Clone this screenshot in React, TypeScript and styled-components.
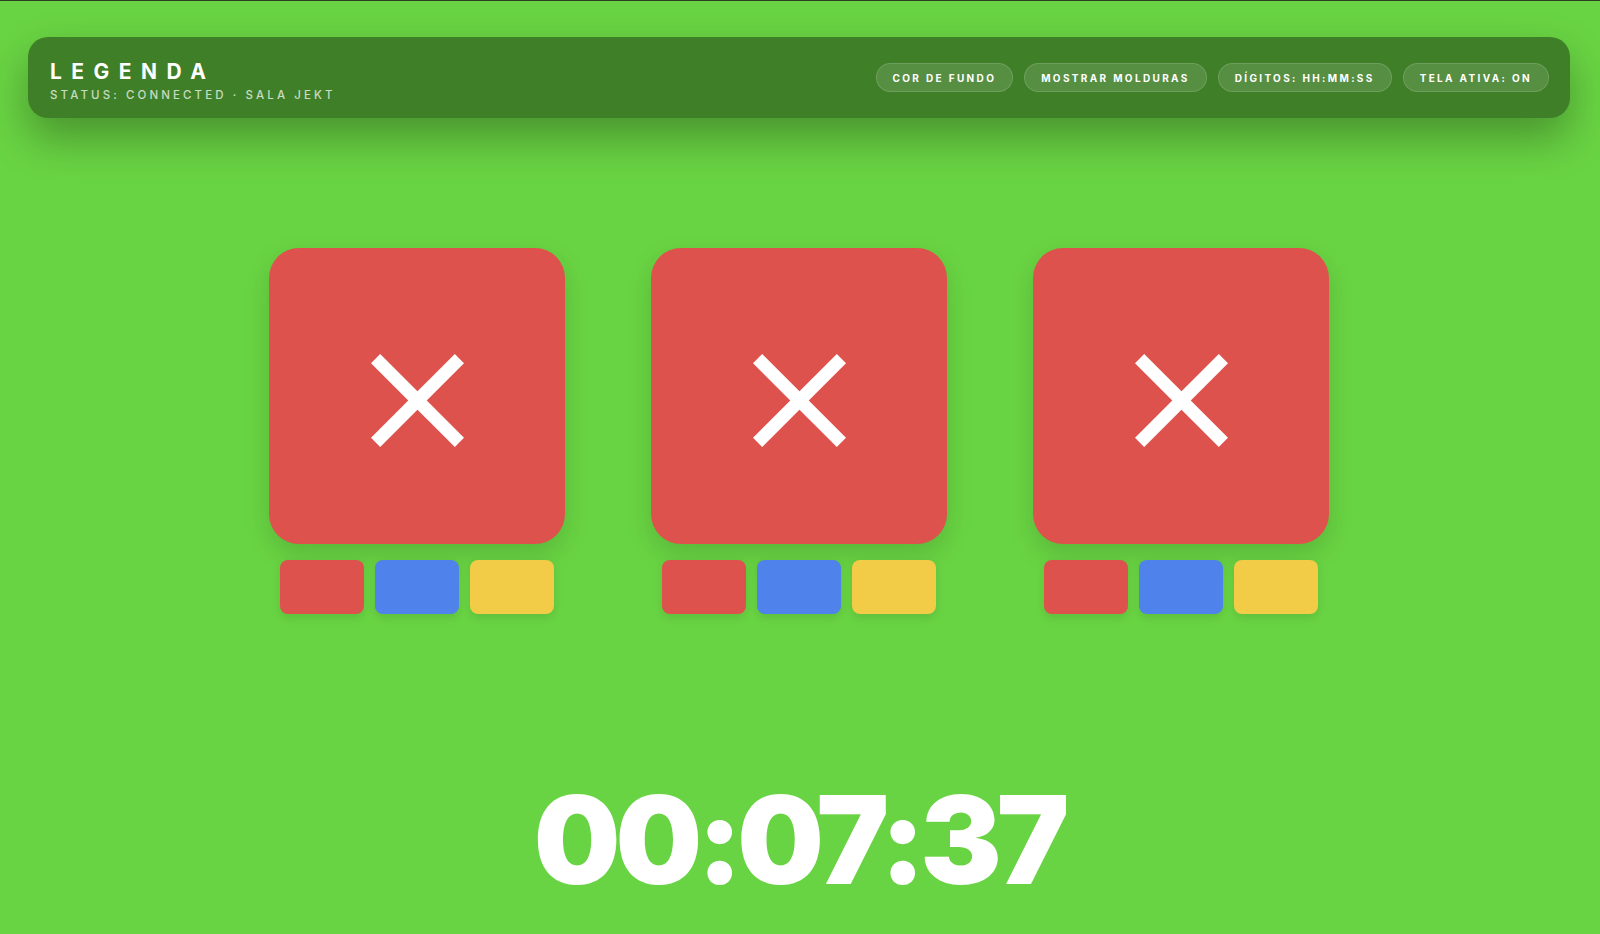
import styled, { createGlobalStyle } from "styled-components";

const GlobalStyle = createGlobalStyle`
  html, body {
    margin: 0;
    padding: 0;
    background: #69d443;
    font-family: Inter, "Liberation Sans", sans-serif;
    color: #ffffff;
  }
  * {
    box-sizing: border-box;
  }
`;

const Page = styled.div`
  min-height: 100vh;
  display: flex;
  flex-direction: column;
  padding: 36px 30px 0 28px;
  border-top: 1px solid #2c3f25;
`;

const Header = styled.header`
  height: 81px;
  display: flex;
  align-items: center;
  justify-content: space-between;
  padding: 0 21px 0 22px;
  border-radius: 20px;
  background: rgba(0, 0, 0, 0.4);
  box-shadow: 0 20px 44px rgba(0, 0, 0, 0.3);
`;

const Brand = styled.div`
  display: flex;
  flex-direction: column;
  gap: 8px;
  padding-top: 8px;
`;

const Title = styled.h1`
  margin: 0;
  font-size: 21px;
  font-weight: 700;
  line-height: 1;
  letter-spacing: 0.45em;
`;

const Subtitle = styled.div`
  font-size: 11.5px;
  font-weight: 500;
  line-height: 1;
  letter-spacing: 0.27em;
  color: rgba(255, 255, 255, 0.72);
`;

const Controls = styled.nav`
  display: flex;
  gap: 11px;
`;

const Pill = styled.button`
  height: 29px;
  padding: 0 16px;
  border-radius: 999px;
  border: 1px solid rgba(255, 255, 255, 0.14);
  background: rgba(255, 255, 255, 0.12);
  color: #ffffff;
  font-family: inherit;
  font-size: 10px;
  font-weight: 700;
  letter-spacing: 0.235em;
  cursor: pointer;
`;

const Stage = styled.main`
  display: flex;
  justify-content: center;
  gap: 86px;
  margin-top: 130px;
`;

const Slot = styled.section`
  width: 296px;
  display: flex;
  flex-direction: column;
  gap: 16px;
`;

const Tile = styled.div`
  height: 296px;
  border-radius: 30px;
  background: #de524d;
  display: flex;
  align-items: center;
  justify-content: center;
  box-shadow: 0 10px 26px rgba(0, 0, 0, 0.14);
`;

const Mark = styled.svg`
  width: 93px;
  height: 93px;
  margin-top: 8px;
`;

const Swatches = styled.div`
  display: flex;
  gap: 11px;
  padding: 0 11px;
`;

const Swatch = styled.div<{ $color: string }>`
  flex: 1;
  height: 54px;
  border-radius: 8px;
  background: ${(p) => p.$color};
  box-shadow: 0 4px 10px rgba(0, 0, 0, 0.1);
`;

const Timer = styled.div`
  margin-top: 165px;
  text-align: center;
  font-size: 122px;
  font-weight: 900;
  line-height: 1;
  letter-spacing: -0.042em;
`;

const controls = [
  "COR DE FUNDO",
  "MOSTRAR MOLDURAS",
  "DÍGITOS: HH:MM:SS",
  "TELA ATIVA: ON",
];

const palette = ["#de524d", "#4f82ea", "#f2cb47"];

function Cross() {
  return (
    <Mark viewBox="0 0 93 93">
      <g stroke="#ffffff" strokeWidth="13" strokeLinecap="butt">
        <line x1="4.6" y1="4.6" x2="88.4" y2="88.4" />
        <line x1="88.4" y1="4.6" x2="4.6" y2="88.4" />
      </g>
    </Mark>
  );
}

export default function App() {
  return (
    <>
      <GlobalStyle />
      <Page>
        <Header>
          <Brand>
            <Title>LEGENDA</Title>
            <Subtitle>STATUS: CONNECTED · SALA JEKT</Subtitle>
          </Brand>
          <Controls>
            {controls.map((label) => (
              <Pill key={label}>{label}</Pill>
            ))}
          </Controls>
        </Header>

        <Stage>
          {[0, 1, 2].map((i) => (
            <Slot key={i}>
              <Tile>
                <Cross />
              </Tile>
              <Swatches>
                {palette.map((c) => (
                  <Swatch key={c} $color={c} />
                ))}
              </Swatches>
            </Slot>
          ))}
        </Stage>

        <Timer>00:07:37</Timer>
      </Page>
    </>
  );
}
